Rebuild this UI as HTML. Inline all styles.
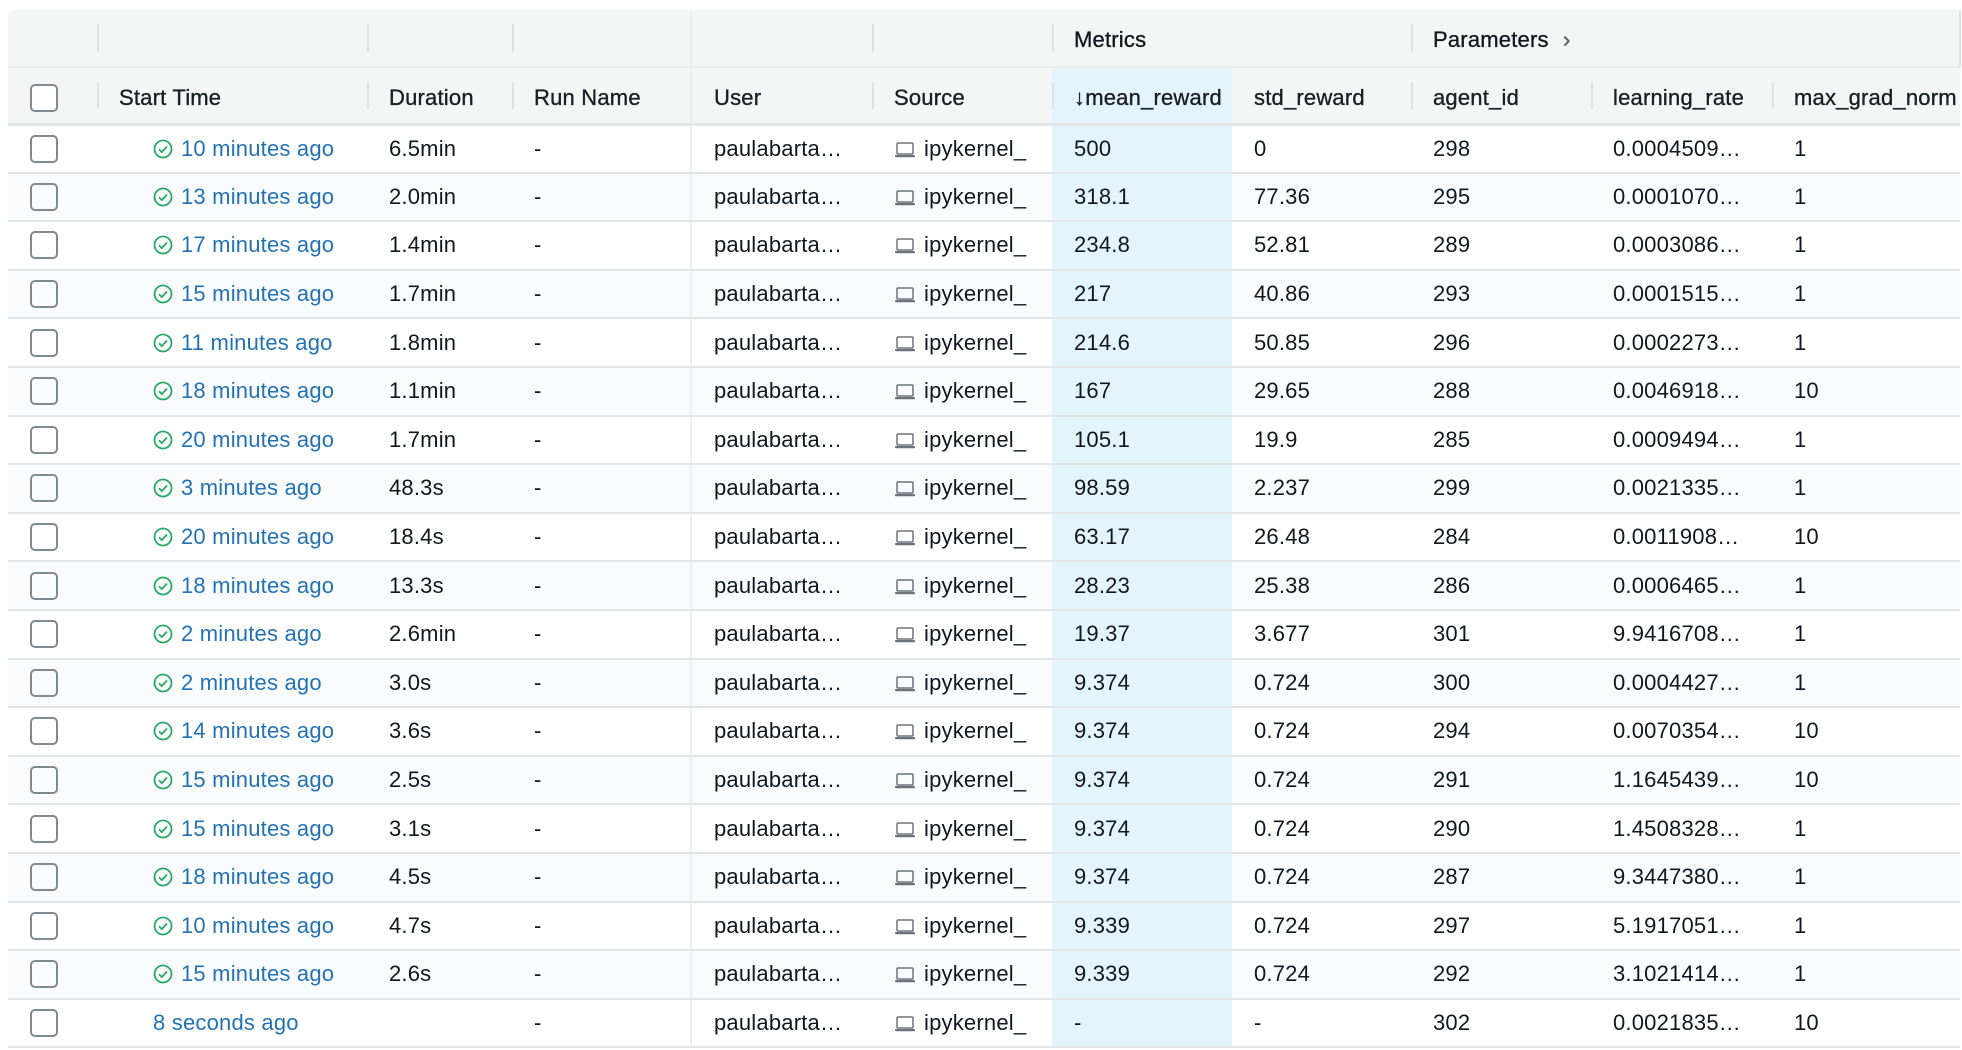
<!DOCTYPE html>
<html><head><meta charset="utf-8"><style>
*{box-sizing:border-box;margin:0;padding:0}
body{width:1962px;height:1050px;background:#fff;font-family:"Liberation Sans",Arial,sans-serif;font-size:22px;letter-spacing:0.2px;color:#11171c;overflow:hidden;position:relative}
.wrap{position:absolute;left:8px;top:10px;width:1954px;background:#fff;border-top-left-radius:6px;overflow:hidden}
table{border-collapse:collapse;table-layout:fixed;width:1952px}
td,th{height:48.6px;padding:0 0 0 22px;white-space:nowrap;overflow:hidden;text-align:left;font-weight:normal;border-bottom:2px solid #e3e5e6;vertical-align:middle}
thead tr.g th{height:57px;background:#f4f5f5;border-bottom:2px solid #e8eaeb;position:relative;padding-top:4px;-webkit-text-stroke:0.35px #1a1f24}
thead tr.h th{height:57px;background:#f4f5f5;border-bottom:3px solid #e3e5e6;color:#1a1f24;position:relative;padding-top:6px;-webkit-text-stroke:0.35px #1a1f24}
th.s:before{content:"";position:absolute;left:0;top:14px;bottom:14px;width:2px;background:#dfe2e4}
tbody tr:nth-child(even) td{background:#f9fbfd}
td.mr,th.mr{background:#e4f4fd !important}
.sep{border-right:2px solid #eceeef}
.cb{display:block;width:28px;height:28px;border:2px solid #7f8b90;border-radius:5px;margin-left:0;-webkit-text-stroke:0}
.link{color:#2272b4}
.ok{display:inline-block;vertical-align:-3px;margin-right:8px}
.pc{display:inline-block;vertical-align:-4px;margin-right:8px}
</style></head><body>
<div class="wrap">
<table>
<colgroup><col style="width:89px"><col style="width:270px"><col style="width:145px"><col style="width:179px"><col style="width:181px"><col style="width:180px"><col style="width:180px"><col style="width:179px"><col style="width:180px"><col style="width:181px"><col style="width:188px"></colgroup>
<thead>
<tr class="g"><th></th><th class="s"></th><th class="s"></th><th class="s sep"></th><th></th><th class="s"></th><th class="s">Metrics</th><th></th><th class="s">Parameters <span style="color:#6b7378;margin-left:8px">&#x203A;</span></th><th></th><th style="border-right:2px solid #dfe2e4"></th></tr>
<tr class="h"><th style="padding-left:22px"><span class="cb" style="background:#fff"></span></th><th class="s">Start Time</th><th class="s">Duration</th><th class="s sep">Run Name</th><th>User</th><th class="s">Source</th><th class="s mr" style="overflow:hidden">&#x2193;mean_reward</th><th>std_reward</th><th class="s">agent_id</th><th class="s">learning_rate</th><th class="s">max_grad_norm</th></tr>
</thead>
<tbody id="b">
</tbody>
</table>
</div>
<script>
var rows=[
["10 minutes ago","6.5min","500","0","298","0.0004509…","1"],
["13 minutes ago","2.0min","318.1","77.36","295","0.0001070…","1"],
["17 minutes ago","1.4min","234.8","52.81","289","0.0003086…","1"],
["15 minutes ago","1.7min","217","40.86","293","0.0001515…","1"],
["11 minutes ago","1.8min","214.6","50.85","296","0.0002273…","1"],
["18 minutes ago","1.1min","167","29.65","288","0.0046918…","10"],
["20 minutes ago","1.7min","105.1","19.9","285","0.0009494…","1"],
["3 minutes ago","48.3s","98.59","2.237","299","0.0021335…","1"],
["20 minutes ago","18.4s","63.17","26.48","284","0.0011908…","10"],
["18 minutes ago","13.3s","28.23","25.38","286","0.0006465…","1"],
["2 minutes ago","2.6min","19.37","3.677","301","9.9416708…","1"],
["2 minutes ago","3.0s","9.374","0.724","300","0.0004427…","1"],
["14 minutes ago","3.6s","9.374","0.724","294","0.0070354…","10"],
["15 minutes ago","2.5s","9.374","0.724","291","1.1645439…","10"],
["15 minutes ago","3.1s","9.374","0.724","290","1.4508328…","1"],
["18 minutes ago","4.5s","9.374","0.724","287","9.3447380…","1"],
["10 minutes ago","4.7s","9.339","0.724","297","5.1917051…","1"],
["15 minutes ago","2.6s","9.339","0.724","292","3.1021414…","1"],
["8 seconds ago","","-","-","302","0.0021835…","10"]];
var ok='<svg class="ok" width="20" height="20" viewBox="0 0 20 20"><circle cx="10" cy="10" r="8.5" fill="none" stroke="#28a862" stroke-width="1.8"/><path d="M6 10.3l2.8 2.8 5.2-5.6" fill="none" stroke="#28a862" stroke-width="1.8"/></svg>';
var pc='<svg class="pc" width="22" height="20" viewBox="0 0 22 20"><rect x="3" y="3" width="16" height="11" rx="1" fill="none" stroke="#6b7378" stroke-width="1.5"/><rect x="1" y="15" width="20" height="2.2" rx="1" fill="#6b7378"/></svg>';
var h='';
rows.forEach(function(r,i){
 var last=i==rows.length-1;
 h+='<tr><td><span class="cb"></span></td><td style="padding-left:56px">'+(last?'':ok)+'<span class="link">'+r[0]+'</span></td><td>'+r[1]+'</td><td class="sep">-</td><td>paulabarta…</td><td>'+pc+'ipykernel_</td><td class="mr">'+r[2]+'</td><td>'+r[3]+'</td><td>'+r[4]+'</td><td>'+r[5]+'</td><td>'+r[6]+'</td></tr>';
});
document.getElementById('b').innerHTML=h;
</script>
</body></html>
